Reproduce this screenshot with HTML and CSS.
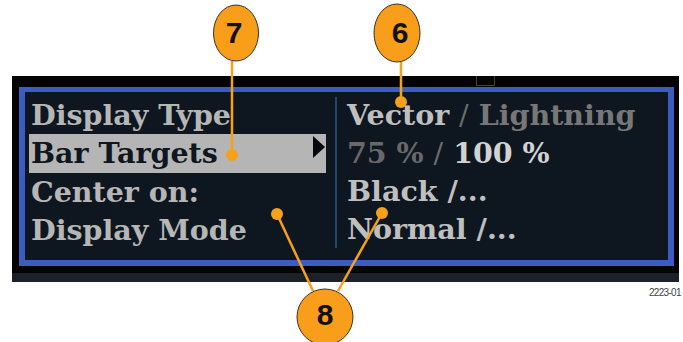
FILE: index.html
```html
<!DOCTYPE html>
<html lang="en">
<head>
  <meta charset="UTF-8" />
  <meta name="viewport" content="width=device-width, initial-scale=1.0"/>
  <title>Vector Display Menu</title>
  <link rel="stylesheet" href="styles.css">
</head>
<body>
  <div class="figure">
    <div class="screen">
      <span class="marker"></span>
      <div class="frame">
        <div class="labels">
          <div class="row">Display Type</div>
          <div class="row sel">Bar Targets<span class="arrow"></span></div>
          <div class="row">Center on:</div>
          <div class="row">Display Mode</div>
        </div>
        <div class="divider"></div>
        <div class="values">
          <div class="row"><span class="on">Vector</span> <span class="sep">/</span> <span class="off">Lightning</span></div>
          <div class="row"><span class="dim">75 %</span> <span class="sep">/</span> <span class="hi">100 %</span></div>
          <div class="row"><span class="on">Black</span> <span class="on">/...</span></div>
          <div class="row"><span class="on">Normal</span> <span class="on">/...</span></div>
        </div>
      </div>
    </div>
    <div class="fig-id">2223-01</div>

    <!-- callouts -->
    <svg class="callouts" width="683" height="342" viewBox="0 0 683 342">
      <g class="lines">
        <line x1="232" y1="61" x2="232" y2="155" />
        <line x1="401" y1="62" x2="401" y2="102" />
        <line x1="277" y1="214" x2="313" y2="291" />
        <line x1="382" y1="213" x2="338" y2="291" />
      </g>
      <g class="dots">
        <circle cx="232" cy="155" r="6" />
        <circle cx="401" cy="102" r="6" />
        <circle cx="277" cy="214" r="6" />
        <circle cx="382" cy="213" r="6" />
      </g>
      <g class="bubbles">
        <ellipse cx="236" cy="33" rx="22.5" ry="28" />
        <ellipse cx="397" cy="33" rx="23" ry="29" />
        <ellipse cx="325" cy="317" rx="28" ry="28" />
      </g>
      <g class="nums">
        <text x="234" y="43">7</text>
        <text x="400" y="43">6</text>
        <text x="325" y="325">8</text>
      </g>
    </svg>
  </div>
</body>
</html>
```

FILE: styles.css
```css
body {
  margin: 0;
  background: #fff;
  font-family: 'DejaVu Serif', serif;
}
.figure {
  position: relative;
  width: 683px;
  height: 342px;
  overflow: hidden;
}
.screen {
  position: relative;
  margin: 76px 0 0 12px;
  width: 655px;
  background: #030303;
  padding: 11px 5px 7px 7px;
  border-bottom: 9px solid #1b2029;
}
.marker {
  position: absolute;
  left: 464px;
  top: 0;
  width: 17px;
  height: 9px;
  border: 1px solid #4a4714;
  border-top: none;
}
.frame {
  display: flex;
  height: 164px;
  border: 6px solid #3b5cc1;
  border-top-width: 5px;
  background: #0e1620;
  padding: 4px 0 0 4px;
  box-sizing: content-box;
  width: 639px;
}
.row {
  height: 38px;
  line-height: 38px;
  font-size: 28.5px;
  font-weight: bold;
  white-space: nowrap;
}
.labels {
  width: 297px;
  color: #b6b6b6;
}
.labels .row {
  padding-left: 2px;
}
.labels .sel {
  position: relative;
  height: 39px;
  background: #b5b5b5;
  color: #0e1620;
}
.arrow {
  position: absolute;
  right: 1px;
  top: 2px;
  width: 0;
  height: 0;
  border-top: 11px solid transparent;
  border-bottom: 11px solid transparent;
  border-left: 12px solid #05080c;
}
.divider {
  width: 2px;
  height: 151px;
  margin: 1px 10px 0 9px;
  background: #25446b;
}
.values .row {
  color: #bdbdbd;
}
.values .on { color: #bfbfbf; }
.values .sep { color: #6c6c6c; font-weight: normal; }
.values .off { color: #777; }
.values .dim { color: #696969; }
.values .hi { color: #d2d2d2; }
.fig-id {
  margin: 5px 0 0 649px;
  font-family: 'Liberation Sans', sans-serif;
  font-size: 10px;
  letter-spacing: -0.7px;
  color: #444;
  white-space: nowrap;
}
.callouts {
  position: absolute;
  left: 0;
  top: 0;
  pointer-events: none;
}
.lines line {
  stroke: #f7a11b;
  stroke-width: 2.5;
}
.dots circle {
  fill: #f7a11b;
}
.bubbles ellipse {
  fill: #f89e1a;
  stroke: #3a3027;
  stroke-width: 1;
}
.nums text {
  font-family: 'Liberation Sans', sans-serif;
  font-weight: bold;
  font-size: 30px;
  fill: #111;
  text-anchor: middle;
}
```
